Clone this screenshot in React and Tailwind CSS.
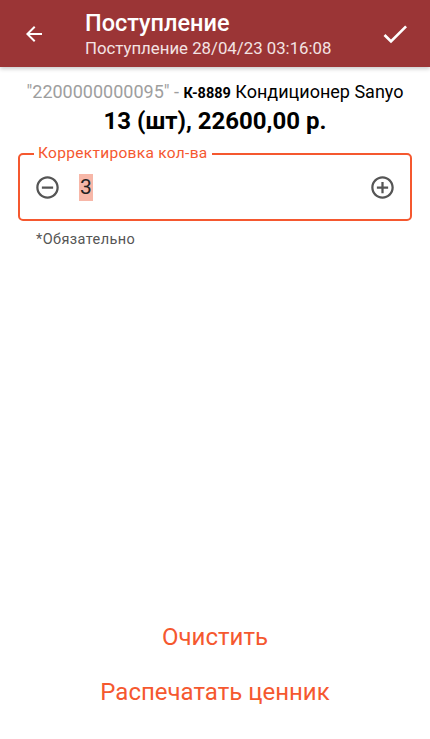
import React from "react";

function ArrowBack() {
  return (
    <svg width="24" height="24" viewBox="0 0 24 24" fill="white">
      <path d="M20 11H7.83l5.59-5.59L12 4l-8 8 8 8 1.41-1.41L7.83 13H20v-2z" />
    </svg>
  );
}

function Check() {
  return (
    <svg width="32" height="32" viewBox="0 0 24 24" fill="white">
      <path d="M9 16.17L4.83 12l-1.42 1.41L9 19 21 7l-1.41-1.41z" />
    </svg>
  );
}

function MinusCircle() {
  return (
    <svg width="27" height="27" viewBox="0 0 24 24" fill="#555">
      <path d="M7 11v2h10v-2H7zm5-9C6.48 2 2 6.48 2 12s4.48 10 10 10 10-4.48 10-10S17.52 2 12 2zm0 18c-4.41 0-8-3.59-8-8s3.59-8 8-8 8 3.59 8 8-3.59 8-8 8z" />
    </svg>
  );
}

function PlusCircle() {
  return (
    <svg width="27" height="27" viewBox="0 0 24 24" fill="#555">
      <path d="M13 7h-2v4H7v2h4v4h2v-4h4v-2h-4V7zm-1-5C6.48 2 2 6.48 2 12s4.48 10 10 10 10-4.48 10-10S17.52 2 12 2zm0 18c-4.41 0-8-3.59-8-8s3.59-8 8-8 8 3.59 8 8-3.59 8-8 8z" />
    </svg>
  );
}

export default function App() {
  return (
    <div className="w-[430px] h-[739px] bg-white flex flex-col font-['Roboto',sans-serif]">
      {/* header */}
      <header className="h-[67px] bg-[#9b3536] flex items-center shadow-[0_2px_4px_rgba(0,0,0,0.2)]">
        <div className="w-[64px] flex justify-center pl-1">
          <ArrowBack />
        </div>
        <div className="flex-1 pl-[21px] text-white">
          <div className="text-[23.5px] font-medium leading-[27px]">Поступление</div>
          <div className="text-[16.8px] leading-[20px] mt-[1px] text-[#f3e3e3]">Поступление 28/04/23 03:16:08</div>
        </div>
        <div className="w-[66px] flex justify-center pr-1">
          <Check />
        </div>
      </header>

      {/* product info */}
      <div className="pt-[14px] text-center">
        <div className="text-[18px] leading-[22px] text-black whitespace-nowrap">
          <span className="text-[#9e9e9e]">"2200000000095" - </span>
          <span className="text-[14.5px] font-bold">К-8889</span> Кондиционер Sanyo
        </div>
        <div className="text-[24px] font-bold leading-[30px] text-black mt-[1px]">13 (шт), 22600,00 р.</div>
      </div>

      {/* quantity field */}
      <div className="px-[18px] mt-[17px]">
        <div className="relative h-[68px] border-2 border-[#f5582f] rounded-[5px] flex items-center px-[14px]">
          <span className="absolute -top-[11px] left-[14px] bg-white px-[4px] text-[15.5px] leading-[18px] text-[#f5582f] tracking-[0.3px]">
            Корректировка кол-ва
          </span>
          <MinusCircle />
          <div className="flex-1 pl-[18px]">
            <span className="bg-[#f7b7a8] text-[21px] leading-[27px] text-[#222] inline-block px-[1px]">3</span>
          </div>
          <PlusCircle />
        </div>
        <div className="pl-[18px] mt-[8px] text-[14.5px] text-[#555] tracking-[0.4px]">*Обязательно</div>
      </div>

      <div className="flex-1" />

      {/* actions */}
      <div className="flex flex-col items-center pb-[20px]">
        <button className="h-[55px] text-[24px] text-[#f5582f]">Очистить</button>
        <button className="h-[55px] text-[24px] text-[#f5582f]">Распечатать ценник</button>
      </div>
    </div>
  );
}
